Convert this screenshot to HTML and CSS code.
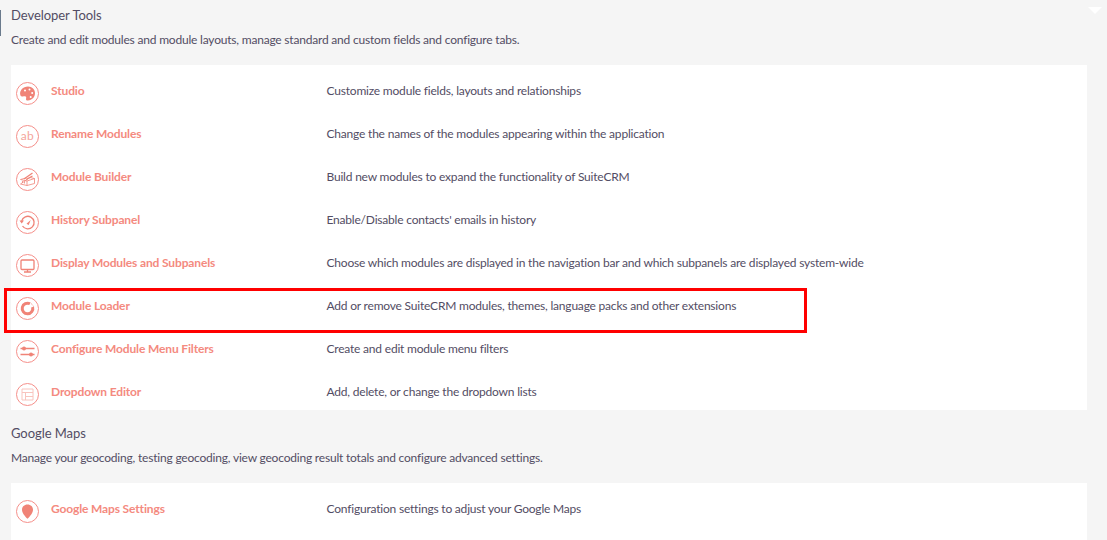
FILE: index.html
```html
<!DOCTYPE html>
<html lang="en">
<head>
  <meta charset="UTF-8">
  <title>Admin</title>
  <link rel="stylesheet" href="styles.css">
</head>
<body>
  <div class="side-mark"></div>
  <div class="corner-arrow"></div>

  <!-- Developer Tools -->
  <section class="section">
    <h2 class="section-title">Developer Tools</h2>
    <p class="section-desc">Create and edit modules and module layouts, manage standard and custom fields and configure tabs.</p>
    <div class="panel">
      <div class="row">
        <svg class="icon" viewBox="0 0 23 23"><circle class="ring" cx="11.5" cy="11.5" r="11"/><path class="fill" d="M12 4.500c4.200 0 7 3 7 6.600 0 4.200-3 7.200-7 7.400-1.600.1-2.300-.9-1.900-2.100.4-1.300-.2-2.300-1.500-2.100-1.500.2-3.800.5-4.300-1.300C3.200 8.600 7 4.500 12 4.500z"/><circle class="hole" cx="9" cy="8.500" r="1"/><circle class="hole" cx="13.500" cy="7.500" r="1"/><circle class="hole" cx="16.200" cy="11" r="1"/><circle class="hole" cx="14.700" cy="15" r="1"/></svg>
        <a class="row-name">Studio</a>
        <span class="row-desc">Customize module fields, layouts and relationships</span>
      </div>
      <div class="row">
        <div class="icon icon-ab">ab</div>
        <a class="row-name">Rename Modules</a>
        <span class="row-desc">Change the names of the modules appearing within the application</span>
      </div>
      <div class="row">
        <svg class="icon" viewBox="0 0 23 23"><circle class="ring" cx="11.500" cy="11.500" r="11"/><path class="line" d="M4.500 11.500l5.500-1.500M14 9.500l4.500 1v5L11 17.500l-6.500-1.500zM4.500 11.500l6.500 1.500v4.500M11 13l7.500-2.500"/><path class="line-bold" d="M8 11l8.500-6M10 11.500l6.500-3.500"/><path class="line" d="M6.500 13v2M8.500 13.500v2"/></svg>
        <a class="row-name">Module Builder</a>
        <span class="row-desc">Build new modules to expand the functionality of SuiteCRM</span>
      </div>
      <div class="row">
        <svg class="icon" viewBox="0 0 23 23"><circle class="ring" cx="11.500" cy="11.500" r="11"/><path class="line-bold" d="M6.500 15a6.300 6.300 0 1 0-.8-5"/><path class="fill" d="M3.500 9.500h4.500l-2.300 3zM10.500 12.800l4.200-3.800-2 5z"/></svg>
        <a class="row-name">History Subpanel</a>
        <span class="row-desc">Enable/Disable contacts' emails in history</span>
      </div>
      <div class="row">
        <svg class="icon" viewBox="0 0 23 23"><circle class="ring" cx="11.500" cy="11.500" r="11"/><rect class="line-bold" x="5" y="6" width="13" height="9.500" rx="1"/><path class="line-bold" d="M11.500 15.500v2.500M8 18h7"/></svg>
        <a class="row-name">Display Modules and Subpanels</a>
        <span class="row-desc">Choose which modules are displayed in the navigation bar and which subpanels are displayed system-wide</span>
      </div>
      <div class="row">
        <svg class="icon" viewBox="0 0 23 23"><circle class="ring" cx="11.500" cy="11.500" r="11"/><path class="loader" d="M14 6.800a5.300 5.300 0 1 0 2.600 3.200"/><path class="line" stroke-dasharray="1 .7" d="M15 6.500a6.500 6.500 0 0 1 2.500 3"/></svg>
        <a class="row-name">Module Loader</a>
        <span class="row-desc">Add or remove SuiteCRM modules, themes, language packs and other extensions</span>
        <div class="highlight"></div>
      </div>
      <div class="row">
        <svg class="icon" viewBox="0 0 23 23"><circle class="ring" cx="11.500" cy="11.500" r="11"/><path class="line-bold" d="M4.500 8.500h14M4.500 14.500h14"/><circle class="fill" cx="8" cy="8.500" r="2"/><circle class="fill" cx="15" cy="14.500" r="2"/></svg>
        <a class="row-name">Configure Module Menu Filters</a>
        <span class="row-desc">Create and edit module menu filters</span>
      </div>
      <div class="row">
        <svg class="icon" viewBox="0 0 23 23"><circle class="ring" cx="11.500" cy="11.500" r="11"/><path class="line-light" d="M6 6h11v11H6zM6 9.500h11M9.500 9.500V17M9.500 13.500H17"/></svg>
        <a class="row-name">Dropdown Editor</a>
        <span class="row-desc">Add, delete, or change the dropdown lists</span>
      </div>
    </div>
  </section>

  <!-- Google Maps -->
  <section class="section">
    <h2 class="section-title">Google Maps</h2>
    <p class="section-desc">Manage your geocoding, testing geocoding, view geocoding result totals and configure advanced settings.</p>
    <div class="panel">
      <div class="row">
        <svg class="icon" viewBox="0 0 23 23"><circle class="ring" cx="11.500" cy="11.500" r="11"/><path class="fill" d="M11.500 4.500c3.300 0 5.500 2.400 5.500 5.300 0 3.500-3.200 6.800-5.500 9-2.300-2.200-5.500-5.500-5.500-9 0-2.900 2.200-5.300 5.500-5.300z"/></svg>
        <a class="row-name">Google Maps Settings</a>
        <span class="row-desc">Configuration settings to adjust your Google Maps</span>
      </div>
    </div>
  </section>
</body>
</html>
```

FILE: styles.css
```css
body {
  margin: 0;
  height: 540px;
  overflow: hidden;
  font-family: Lato, sans-serif;
  font-size: 12px;
  letter-spacing: -.2px;
  color: #534d64;
  background-color: #f5f5f5;
}
.section {
  margin: 0 20px 0 11px;
  padding-top: 5px;
}
.section + .section {
  padding-top: 13px;
}
.section-title {
  margin: 0;
  font-size: 13px;
  font-weight: 400;
  letter-spacing: -.05px;
  line-height: 20px;
}
.section-desc {
  margin: 6px 0 0;
  line-height: 18px;
}
.panel {
  display: flex;
  flex-direction: column;
  gap: 20px;
  margin-top: 16px;
  padding: 17px 0 4px 5px;
  background-color: #fff;
}
.section:last-child .panel {
  padding-bottom: 40px;
}
.row {
  position: relative;
  display: flex;
  height: 23px;
  line-height: 18px;
}
.icon {
  flex: none;
  width: 23px;
  height: 23px;
}
.icon-ab {
  box-sizing: border-box;
  border: 1px solid #f58f8a;
  border-radius: 50%;
  text-align: center;
  line-height: 20px;
  font-size: 12px;
  letter-spacing: .4px;
  color: #f4a59c;
}
.row-name {
  flex: none;
  width: 275.5px;
  margin-left: 12px;
  font-weight: 700;
  letter-spacing: -.14px;
  color: #f48a80;
}
/* iconos */
.ring {
  fill: none;
  stroke: #f58f8a;
  stroke-width: 1;
}
.fill {
  fill: #f08377;
}
.hole {
  fill: #fff;
}
.line {
  fill: none;
  stroke: #f08377;
  stroke-width: .8;
}
.line-bold {
  fill: none;
  stroke: #f08377;
  stroke-width: 1.3;
}
.line-light {
  fill: none;
  stroke: #f8c4be;
  stroke-width: 1;
}
.loader {
  fill: none;
  stroke: #f08377;
  stroke-width: 3;
}
/* marca roja sobre la captura */
.highlight {
  position: absolute;
  left: -12px;
  top: -9px;
  width: 797px;
  height: 39px;
  border: 3px solid #f00;
}
.side-mark {
  position: absolute;
  left: 0;
  top: 10px;
  width: 1px;
  height: 26px;
  background-color: #6a7a8c;
}
.corner-arrow {
  position: absolute;
  left: 1088px;
  top: 7px;
  border-left: 7px solid transparent;
  border-right: 7px solid transparent;
  border-top: 7px solid #fff;
}
```
